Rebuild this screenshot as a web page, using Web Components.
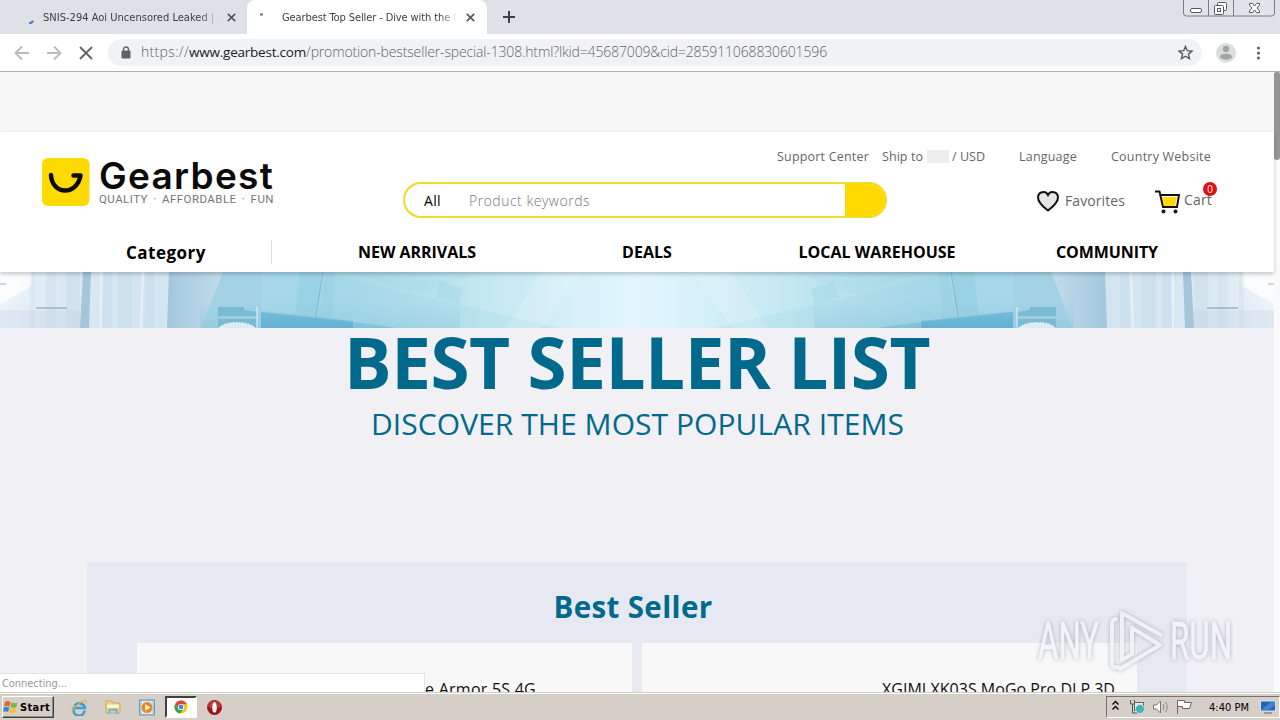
<!DOCTYPE html>
<html lang="en">
<head>
<meta charset="utf-8">
<title>Gearbest Top Seller</title>
<style>
  html, body { margin: 0; height: 720px; overflow: hidden; }
  body { font-family: "Open Sans", "Noto Sans", sans-serif; background: #fff; }
</style>
</head>
<body>
<desktop-screen></desktop-screen>

<script>
const define = (name, html, setup) => {
  const template = document.createElement('template');
  template.innerHTML = html;
  customElements.define(name, class extends HTMLElement {
    constructor() {
      super();
      this.attachShadow({ mode: 'open' });
      this.shadowRoot.appendChild(template.content.cloneNode(true));
    }

    connectedCallback() {
      if (setup) setup.call(this, this.shadowRoot);
    }
  });
};

// one line of text, tracked so that it takes the given width
define('fit-text', `
<style>
  :host { display: block; flex: none; }
  span { display: block; width: max-content; white-space: pre; }
</style>
<span><slot></slot></span>
`, function (root) {
  const width = Number(this.getAttribute('width'));
  const span = root.querySelector('span');
  this.style.width = `${width}px`;
  const natural = span.getBoundingClientRect().width;
  const count = this.textContent.length;
  span.style.letterSpacing = `${(width - natural) / count}px`;
});

define('browser-tab', `
<style>
  :host { display: flex; align-items: center; width: 240px; height: 34px; box-sizing: border-box;
    padding-left: 12px; font: 11px "DejaVu Sans Condensed", "DejaVu Sans", sans-serif; color: #3c4043; }
  :host([active]) { background: #fff; border-radius: 8px 8px 0 0; }
  .icon { width: 23px; height: 16px; flex: none; }
  .title { width: 177px; overflow: hidden; flex: none;
    -webkit-mask: linear-gradient(90deg, #000 157px, transparent 176px); mask: linear-gradient(90deg, #000 157px, transparent 176px); }
  .close { width: 9px; height: 9px; margin-left: 7px; }
</style>
<div class="icon"><slot name="icon"></slot></div>
<div class="title"><slot></slot></div>
<svg class="close" viewBox="0 0 9 9"><path d="M.8.8l7.4 7.4M8.2.8L.8 8.2" stroke="#55585c" stroke-width="1.7"/></svg>
`);

define('tab-strip', `
<style>
  :host { display: flex; height: 34px; background: #dee1e6; overflow: hidden; }
  browser-tab:first-child { width: 239px; }
  .tabs { display: flex; padding-left: 8px; }
  svg { display: block; flex: none; }
  .plus { margin: 11px 0 0 16px; }
  .frame { margin-left: auto; margin-right: 4px; }
</style>
<div class="tabs">
  <browser-tab>
    <svg slot="icon" width="20" height="16"><path d="M9 14.2q3 0 4-2.6" fill="none" stroke="#4a7bd0" stroke-width="2"/></svg>
    <fit-text width="190">SNIS-294 Aoi Uncensored Leaked | JAV</fit-text>
  </browser-tab>
  <browser-tab active>
    <svg slot="icon" width="20" height="16"><path d="M1 5.5h3" stroke="#4a6fd0" stroke-width="2"/></svg>
    <fit-text width="178">Gearbest Top Seller - Dive with the C</fit-text>
  </browser-tab>
</div>
<svg class="plus" width="12" height="12"><path d="M6 0v12M0 6h12" stroke="#3c4043" stroke-width="2"/></svg>
<svg class="frame" width="94" height="18" fill="none" stroke="#777c86">
  <path d="M1.5 0v13q0 3 3 3h85q3 0 3-3V0M26.500 0v16M51.500 0v16" fill="#e1e3e8"/>
  <rect x="8.500" y="8.500" width="11" height="4" rx="1.500" fill="#fff" stroke="#555a63"/>
  <rect x="35.500" y="2.500" width="9" height="8" rx="1" fill="#fff" stroke="#555a63"/>
  <rect x="32.500" y="5.500" width="9" height="9" rx="1" fill="#fff" stroke="#555a63"/>
  <rect x="35.500" y="8.500" width="3" height="3" stroke="#555a63"/>
  <path d="M67.500 3.500h3l2 2.500 2-2.500h3v1.500l-2.500 3 2.500 3v1.500h-3l-2-2.500-2 2.500h-3V11l2.500-3-2.500-3z" fill="#fff" stroke="#555a63"/>
</svg>
`);

define('address-bar', `
<style>
  :host { display: flex; align-items: center; height: 38px; box-sizing: border-box; background: #fff;
    border-bottom: 1px solid #aeb1ae; }
  svg { display: block; flex: none; }
  .nav { margin-left: 14px; }
  .field { display: flex; align-items: center; width: 1094px; height: 27px; margin-left: 14px; box-sizing: border-box;
    border-radius: 14px; background: #f0f3f5; padding-left: 13px; }
  .url { display: flex; margin: -1px 0 0 10px; font: 14px/26px "Open Sans", sans-serif; font-weight: 300; color: #5f6368; flex: 1; }
  .host { color: #202124; font-weight: 400; font-size: 13.500px; }
  .star { margin-right: 9px; }
  .user { margin-left: 14px; }
  .menu { margin-left: 20px; }
</style>
<svg class="nav" width="80" height="16" fill="none" stroke-width="1.900">
  <path d="M15 8H2M8 1.500L1.500 8 8 14.500M33 8h13M40 1.500L46.500 8 40 14.500" stroke="#b9bbbd"/>
  <path d="M66 2l12 12M78 2L66 14" stroke="#606468"/>
</svg>
<div class="field">
  <svg width="10" height="13"><rect x=".5" y="4.500" width="9" height="8" rx="1" fill="#5f6368"/><path d="M2.500 5V3.500a2.500 2.500 0 015 0V5" fill="none" stroke="#5f6368" stroke-width="1.400"/></svg>
  <div class="url"><fit-text width="48">https://</fit-text><fit-text class="host" width="117">www.gearbest.com</fit-text><fit-text width="521">/promotion-bestseller-special-1308.html?lkid=45687009&amp;cid=285911068830601596</fit-text></div>
  <svg class="star" width="15" height="15" viewBox="0 0 15 15"><path d="M7.500 1.400l1.800 4.300 4.700.4-3.600 3 1.100 4.500-4-2.400-4 2.400 1.100-4.500-3.600-3 4.700-.4z" fill="none" stroke="#55595d" stroke-width="1.400"/></svg>
</div>
<svg class="user" width="20" height="20"><circle cx="10" cy="10" r="10" fill="#dcdddd"/><circle cx="10" cy="6" r="3.200" fill="#a2a4a5"/><ellipse cx="10" cy="13.700" rx="6" ry="3" fill="#a2a4a5"/></svg>
<svg class="menu" width="5" height="14" fill="#5f6368"><circle cx="2.500" cy="2" r="1.600"/><circle cx="2.500" cy="7" r="1.600"/><circle cx="2.500" cy="12" r="1.600"/></svg>
`);

define('gear-logo', `
<style>
  :host { display: flex; width: 232px; height: 48px; }
  svg { display: block; flex: none; }
  .words { margin-left: 9px; width: 176px; }
  .name { font: 600 37px/35px Inter, sans-serif; color: #0b0b0b; }
  .tag { font: 11.500px/12px Roboto, sans-serif; color: #777; word-spacing: 2px; }
</style>
<svg width="48" height="48">
  <rect width="47.500" height="48" rx="6" fill="#ffda00"/>
  <path d="M9 17C9.500 27 16 32.500 23 32.500S37 27 38.500 17.500H31.500" fill="none" stroke="#0b0b0b" stroke-width="4.500" stroke-linecap="round" stroke-linejoin="round"/>
</svg>
<div class="words">
  <fit-text class="name" width="175">Gearbest</fit-text>
  <fit-text class="tag" width="175">QUALITY · AFFORDABLE · FUN</fit-text>
</div>
`);

define('search-box', `
<style>
  :host { display: flex; width: 484px; height: 36px; box-sizing: border-box; border: 2px solid #efdc20;
    border-radius: 18px; overflow: hidden; font-size: 14px; line-height: 33px; background: #fff; }
  .scope { width: 64px; padding-left: 19px; box-sizing: border-box; color: #000; }
  .input { flex: 1; color: #777; font-weight: 300; }
  .go { width: 42px; background: #ffd900; margin: -2px -2px -2px 0; }
</style>
<div class="scope"><fit-text width="17">All</fit-text></div>
<div class="input"><fit-text width="121">Product keywords</fit-text></div>
<div class="go"></div>
`);

define('shop-header', `
<style>
  :host { display: block; height: 140px; background: #fff; position: relative; z-index: 1; box-shadow: 0 2px 4px rgba(0,0,0,.22); color: #666; }
  .top { display: flex; height: 100px; }
  gear-logo { margin: 26px 0 0 42px; }
  search-box { margin: 50px 0 0 129px; }
  .side { margin-left: -110px; width: 440px; }
  .links { display: flex; align-items: center; height: 20px; margin-top: 14px; font-size: 12.500px; }
  .flag { width: 22px; height: 13px; background: #ededed; margin: 0 3px 0 4px; }
  .actions { display: flex; align-items: center; height: 26px; margin: 22px 0 0 259px; font-size: 14px; }
  .actions svg { display: block; flex: none; }
  .actions fit-text { margin-top: -2px; }
  .cart { position: relative; display: flex; align-items: center; margin-left: 29px; }
  .cart fit-text { margin-top: -3px; }
  .badge { position: absolute; left: 48px; top: -6px; width: 14px; height: 14px; border-radius: 7px; background: #e60d0d;
    color: #fff; font: 10px/14px "Open Sans", sans-serif; text-align: center; }
  nav { display: flex; height: 40px; color: #000; font-weight: 700; font-size: 16px; line-height: 40px; }
  .category { width: 271px; height: 24px; margin-top: 8px; line-height: 25px; font-size: 17px; border-right: 1px solid #ddd; margin-right: 30px; }
  .category fit-text { margin-left: 126px; }
  .item { width: 230px; display: flex; justify-content: center; }
</style>
<div class="top">
  <gear-logo></gear-logo>
  <search-box></search-box>
  <div class="side">
    <div class="links">
      <fit-text width="92">Support Center</fit-text>
      <fit-text width="41" style="margin-left:13px">Ship to</fit-text>
      <div class="flag"></div>
      <fit-text width="33">/ USD</fit-text>
      <fit-text width="58" style="margin-left:34px">Language</fit-text>
      <fit-text width="100" style="margin-left:34px">Country Website</fit-text>
    </div>
    <div class="actions">
      <svg width="24" height="24"><path d="M12 21.500C6 17 2 13 2 8.500A5.300 5.300 0 0112 6a5.300 5.300 0 0110 2.500C22 13 18 17 12 21.500z" fill="#e6e6e6" stroke="#111" stroke-width="2"/></svg>
      <fit-text width="60" style="margin-left:5px">Favorites</fit-text>
      <div class="cart" style="margin-left:30px">
        <svg width="26" height="26"><path d="M7 9h15l-2 9H9z" fill="#ffd900"/><path d="M0 3.500h4.500L8 19h14l2-12H6" fill="none" stroke="#111" stroke-width="2"/><circle cx="8.500" cy="23.500" r="2" fill="#111"/><circle cx="20.500" cy="23.500" r="2" fill="#111"/></svg>
        <fit-text width="28" style="margin-left:3px">Cart</fit-text>
        <div class="badge">0</div>
      </div>
    </div>
  </div>
</div>
<nav>
  <div class="category"><fit-text width="80">Category</fit-text></div>
  <div class="item"><fit-text width="118">NEW ARRIVALS</fit-text></div>
  <div class="item"><fit-text width="50">DEALS</fit-text></div>
  <div class="item"><fit-text width="157">LOCAL WAREHOUSE</fit-text></div>
  <div class="item"><fit-text width="102">COMMUNITY</fit-text></div>
</nav>
`);

// the skyline strip: one half is drawn, the other is its mirror
define('hero-strip', `
<style>
  :host { display: block; height: 56px; }
  svg { display: block; }
</style>
<svg width="1274" height="56">
  <defs>
    <linearGradient id="sky"><stop offset="0" stop-color="#eef4f9"/><stop offset=".1" stop-color="#dbe8f2"/><stop offset=".3" stop-color="#d0e4f0"/><stop offset=".35" stop-color="#a9d7e8"/><stop offset=".55" stop-color="#a9dae9"/><stop offset=".75" stop-color="#c2e7f1"/><stop offset="1" stop-color="#e2f6fc"/></linearGradient>
    <linearGradient id="slab" x2="1"><stop offset="0" stop-color="#a2c7de"/><stop offset="1" stop-color="#c2dceb"/></linearGradient>
    <linearGradient id="deep" x2="0" y2="1"><stop offset="0" stop-color="#9bd0e4"/><stop offset="1" stop-color="#63b4d4"/></linearGradient>
    <linearGradient id="low" x2="0" y2="1"><stop offset=".5" stop-color="#7dbdd8" stop-opacity="0"/><stop offset="1" stop-color="#7dbdd8" stop-opacity=".3"/></linearGradient>
    <g id="half">
      <rect width="638" height="56" fill="url(#sky)"/>
      <path d="M0 0h32v14L0 32z" fill="#fff" opacity=".75"/>
      <path d="M0 38h80v18H0z" fill="#c3d5e5" opacity=".35"/>
      <path d="M30 0h5v56h-5zM46 0h10v56H46zM66 0h14v56H66z" fill="#b4d2e2" opacity=".2"/>
      <path d="M36 36h31" stroke="#879fb1" stroke-width="1.500" opacity=".75"/><path d="M0 12h6" stroke="#a6b5c6"/>
      <path d="M83 0h8l-2 56h-9z" fill="#a4c5da"/>
      <path d="M104 0h8v56h-10zM118 0h14v56h-14zM146 0h8v56h-10z" fill="#b3d0e6" opacity=".25"/>
      <path d="M101 0v56M143 0l-2 56" stroke="#fff" stroke-width="2" opacity=".45"/>
      <path d="M169 0h54l-22 56h-34z" fill="url(#slab)"/>
      <path d="M223 0h38v56h-60z" fill="#a4d2e5"/>
      <path d="M261 0h64l-8 56h-56z" fill="#a5d7e8"/>
      <path d="M300 0h22l-6 56h-22zM325 0h10l-4 56h-14z" fill="#80c0d8" opacity=".25"/>
      <path d="M323 0l-9 56" stroke="#64a9c3" opacity=".6"/>
      <path d="M335 4l225 52H330z" fill="#8fcddd" opacity=".18"/>
      <path d="M350 0h130l-60 22z" fill="#8ccde0" opacity=".12"/>
      <path d="M440 10l23 6-4 16-24-7z" fill="#84cbd9" opacity=".22"/>
      <path d="M543 0h40l-42 56h-35z" fill="#fff" opacity=".15"/>
      <path d="M261 39l92 10v7h-92z" fill="url(#deep)"/><path d="M261 40l92 10v6h-92z" fill="#4ba5cb" opacity=".45"/>
      <path d="M353 50l45 6h-45z" fill="#69b9d5" opacity=".6"/>
      <path d="M218 35h26v3l13 2v4h-39zM218 47h38v9h-38z" fill="#5ea9c7" opacity=".6"/>
      <path d="M257 35v21" stroke="#d6eef5" stroke-width="1.500"/>
      <path d="M200 0h260v56H200z" fill="url(#low)"/>
      <ellipse cx="237" cy="58" rx="18" ry="7" fill="#d8edf4" stroke="#e6f5f9" stroke-width="2" stroke-dasharray="2 1"/>
    </g>
  </defs>
  <use href="#half"/>
  <use href="#half" transform="matrix(-1 0 0 1 1274 0)"/>
</svg>
`);

define('product-card', `
<style>
  :host { display: block; background: #f8f8f8; height: 160px; box-sizing: border-box; padding-top: 34px;
    color: #111; font-size: 16px; line-height: 24px; }
</style>
<slot></slot>
`);

define('shop-page', `
<style>
  :host { display: flex; height: 620px; overflow: hidden; background: #fafafa; position: relative; }
  main { width: 1274px; background: #f1f0f5; color: #00698c; }
  .promo { height: 60px; background: #f7f7f7; }
  .title { display: flex; flex-direction: column; align-items: center; height: 234px; }
  .title fit-text:first-child { font-weight: 700; font-size: 71px; line-height: 68px; }
  .title fit-text:last-child { font-size: 30px; line-height: 40px; margin: 8px 0 0 1px; }
  section { width: 1100px; height: 200px; margin: 0 87px; background: #e6e9f2; }
  .head { display: flex; justify-content: center; height: 81px; margin-right: 8px; font: 700 29.500px/90px "Open Sans", sans-serif; }
  .cards { display: grid; grid-template-columns: 495px 495px; gap: 10px; padding: 0 50px; }
  .thumb { width: 6px; height: 88px; background: #969696; border-radius: 2px 2px 3px 3px; }
  .status { position: absolute; left: 0; top: 601px; width: 424px; height: 18px; border: 1px solid #e4e4e4; border-width: 1px 1px 0 0;
    background: #fff; color: #999; font: 11px/19px "DejaVu Sans Condensed", "DejaVu Sans", sans-serif; z-index: 2; }
  .status fit-text { margin-left: 2px; }
</style>
<main>
  <div class="promo"></div>
  <shop-header></shop-header>
  <hero-strip></hero-strip>
  <div class="title">
    <fit-text width="586">BEST SELLER LIST</fit-text>
    <fit-text width="533">DISCOVER THE MOST POPULAR ITEMS</fit-text>
  </div>
  <section>
    <div class="head"><fit-text width="159">Best Seller</fit-text></div>
    <div class="cards">
      <product-card><fit-text width="121" style="margin-left:278px">ne Armor 5S 4G</fit-text></product-card>
      <product-card><fit-text width="233" style="margin-left:240px">XGIMI XK03S MoGo Pro DLP 3D</fit-text></product-card>
    </div>
  </section>
</main>
<div class="thumb"></div>
<div class="status"><fit-text width="65">Connecting...</fit-text></div>
`);

define('task-bar', `
<style>
  :host { display: flex; align-items: flex-start; height: 28px; box-sizing: border-box; background: #d5cfc7;
    border-top: 1px solid #d5cfc7; box-shadow: inset 0 1px #fff; padding-top: 3px;
    font: 11px "DejaVu Sans Condensed", "DejaVu Sans", sans-serif; color: #000; }
  svg { display: block; flex: none; }
  .start { display: flex; align-items: center; width: 52px; height: 22px; margin-left: 2px; box-sizing: border-box;
    border: 1px solid; border-color: #fff #404040 #404040 #fff; box-shadow: inset -1px -1px #8c8880; font-weight: 700; }
  .quick { display: flex; align-items: center; height: 22px; margin-left: 17px; }
  .slot { width: 34px; }
  .current { width: 32px; height: 22px; box-sizing: border-box; border: 2px solid; border-color: #404040 #fff #fff #404040;
    background: #fff; display: flex; justify-content: center; align-items: center; margin: 0 10px 0 -8px; }
  .tray { display: flex; align-items: center; margin-left: auto; width: 174px; height: 22px; box-sizing: border-box;
    border: 1px solid; border-color: #77736c #fff #fff #77736c; }
</style>
<div class="start">
  <svg width="16" height="16"><path d="M2 3q3-2 5.500 0L6.500 7.500q-3-1.500-5.500 0z" fill="#e8632c"/><path d="M8.500 3.500q3 1.500 6 0l-1.200 4.500q-3 1.500-5.800 0z" fill="#79b83b"/><path d="M.8 8.500q3-1.600 5.500 0L5 13q-2.800-1.600-5 0z" fill="#3b83d1"/><path d="M7.300 9q3 1.500 5.800 0l-1.200 4.500q-3 1.500-5.900-.2z" fill="#f6c32e"/></svg>
  <fit-text width="30" style="margin-left:1px">Start</fit-text>
</div>
<div class="quick">
  <div class="slot"><svg width="17" height="17"><path d="M13.500 11.500A5.500 5.500 0 113 9h10.800A5.500 5.500 0 003.600 7" fill="none" stroke="#3d9edc" stroke-width="2.600"/><path d="M1 14C0 11 9 2 14 1.500c3 0 1 3 1 3" fill="none" stroke="#e0b43c" stroke-width="1.200"/></svg></div>
  <div class="slot"><svg width="16" height="16"><path d="M1 2h6l1 2h7v10H1z" fill="#eed17c" stroke="#c2a049" stroke-width=".7"/><path d="M2 5.500h12V9H2z" fill="#fdf4c0"/><path d="M3 15v-4q0-1.500 1.500-1.500h7Q13 9.500 13 11v4h-2.500v-3h-5v3z" fill="#73bce2"/></svg></div>
  <div class="slot"><svg width="16" height="17"><rect x=".5" y="1" width="15" height="15" fill="#a5cbe8" stroke="#6699c2"/><rect x="2.500" y="2" width="11" height="13" fill="#dceaf5"/><circle cx="8" cy="8.500" r="5.500" fill="#ee881d"/><path d="M6.300 5.200v6.600l5-3.300z" fill="#fff"/></svg></div>
  <div class="current"><svg width="14" height="14" viewBox="0 0 14 14"><circle cx="7" cy="7" r="6.500" fill="#f5c52c"/><path d="M1.200 4A6.500 6.500 0 0112.900 4.200H7L4.500 8.500z" fill="#db4535"/><path d="M1.200 4L4.500 8.700l4.300.8-2.500 4A6.500 6.500 0 011.200 4z" fill="#3d9f4c"/><circle cx="7" cy="7" r="3.100" fill="#fff"/><circle cx="7" cy="7" r="2.400" fill="#4a87e0"/></svg></div>
  <svg width="15" height="15"><circle cx="7.500" cy="7.500" r="7.400" fill="#a31014"/><path d="M1 7A6.500 6.500 0 0114 7q-6 3-13 0z" fill="#d2504c" opacity=".6"/><ellipse cx="7.500" cy="7.500" rx="2.200" ry="5.200" fill="#fff"/></svg>
</div>
<div class="tray">
  <svg width="94" height="20">
    <path d="M5.500 8l3-3 3 3M5.500 13l3-3 3 3" transform="translate(0 -.5)" fill="none" stroke="#000" stroke-width="1.300"/>
    <path d="M23.500 3v4h4V3M25.500 7v9h5" fill="none" stroke="#555"/><rect x="27.500" y="5.500" width="9" height="8" fill="#e5edf1" stroke="#5b6870"/><circle cx="33" cy="12" r="4.500" fill="#48afb4" stroke="#bce4e6"/>
    <path d="M46.500 8h3l4-4v12l-4-4h-3z" fill="#fff" stroke="#777"/><path d="M56 7q2 3 0 6M58.500 5q3.500 5 0 10" fill="none" stroke="#888"/>
    <path d="M70.500 17V3.500h7v2h7l-2 6h-7v-2h-4.500" fill="#fff" stroke="#666"/>
  </svg>
  <fit-text width="40" style="margin-left:8px">4:40 PM</fit-text>
  <svg width="16" height="16" style="margin-left:11px"><rect x=".5" y="2" width="15" height="10" fill="#2464b8" stroke="#d9e1ec"/><path d="M1 11l10-8h4v3L7 12H1z" fill="#5c98dc" opacity=".6"/><path d="M4 14h8" stroke="#5b6472"/></svg>
</div>
`);

define('water-mark', `
<style>
  :host { position: absolute; left: 1030px; top: 600px; z-index: 5; }
  svg { display: block; filter: drop-shadow(0 0 2px rgba(110,115,130,.6)); opacity: .85; }
  text { font: 400 52px Roboto, sans-serif; fill: #f4f5fb; stroke: #f4f5fb; stroke-width: .8; }
</style>
<svg width="210" height="82">
  <text x="8" y="59" textLength="61" lengthAdjust="spacingAndGlyphs">ANY</text>
  <text x="140" y="59" textLength="62" lengthAdjust="spacingAndGlyphs">RUN</text>
  <g fill="none" stroke="#f2f3f9" stroke-width="4" stroke-linejoin="round" stroke-linecap="round">
    <path d="M86 19q-4 0-4 6v38q0 6 6 4"/>
    <path d="M92 60V13l39 22"/>
    <path d="M102 28l28 17-40 24M92 60l10-6V28"/>
  </g>
</svg>
`);

define('desktop-screen', `
<style>
  :host { display: block; position: relative; width: 1280px; height: 720px; overflow: hidden; }
</style>
<tab-strip></tab-strip>
<address-bar></address-bar>
<shop-page></shop-page>
<task-bar></task-bar>
<water-mark></water-mark>
`);
</script>
</body>
</html>
